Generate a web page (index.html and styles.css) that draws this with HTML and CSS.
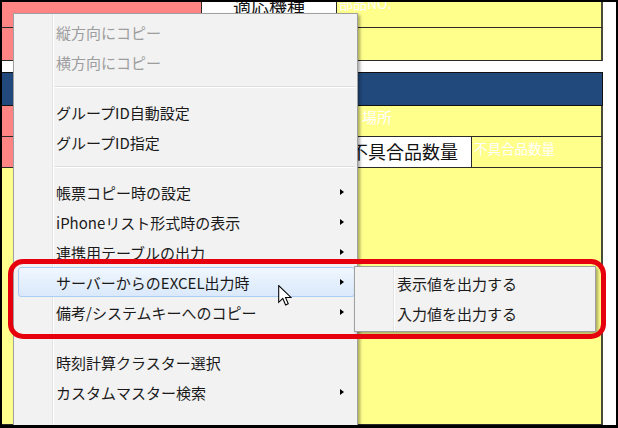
FILE: index.html
```html
<!DOCTYPE html>
<html lang="ja">
<head>
<meta charset="utf-8">
<title>Context menu</title>
<link rel="stylesheet" href="styles.css">
</head>
<body>
<div class="frame">
  <div class="sheet">
    <div class="row r1">
      <div class="cell pink w200"></div>
      <div class="cell white w135 head"><span>適応機種</span></div>
      <div class="cell yellow grow label top"><span>部品NO.</span></div>
    </div>
    <div class="row r2">
      <div class="cell pink w200"></div>
      <div class="cell yellow grow"></div>
    </div>
    <div class="gap"></div>
    <div class="band"></div>
    <div class="row r3">
      <div class="cell pink w200"></div>
      <div class="cell yellow w135"></div>
      <div class="cell yellow grow label place">場所</div>
    </div>
    <div class="row r4">
      <div class="cell pink w200"></div>
      <div class="cell yellow w135"></div>
      <div class="cell white w135 head2">不具合品数量</div>
      <div class="cell yellow grow label small">不具合品数量</div>
    </div>
    <div class="row r5">
      <div class="cell yellow grow"></div>
    </div>
  </div>

  <div class="menu">
    <div class="item disabled">縦方向にコピー</div>
    <div class="item disabled">横方向にコピー</div>
    <div class="sep"></div>
    <div class="item">グループID自動設定</div>
    <div class="item">グループID指定</div>
    <div class="sep"></div>
    <div class="item">帳票コピー時の設定<span class="arrow"></span></div>
    <div class="item">iPhoneリスト形式時の表示<span class="arrow"></span></div>
    <div class="item">連携用テーブルの出力<span class="arrow"></span></div>
    <div class="item hot">サーバーからのEXCEL出力時<span class="arrow"></span></div>
    <div class="item">備考/システムキーへのコピー<span class="arrow"></span></div>
    <div class="sep"></div>
    <div class="item">時刻計算クラスター選択</div>
    <div class="item">カスタムマスター検索<span class="arrow"></span></div>
  </div>

  <div class="submenu">
    <div class="item">表示値を出力する</div>
    <div class="item">入力値を出力する</div>
  </div>

  <div class="mark"></div>

  <svg class="cursor" width="14" height="21" viewBox="0 0 13 20">
    <path d="M0.5 0.5 L0.5 16.5 L4.4 12.8 L7.1 19 L9.6 17.9 L7 11.9 L12.2 11.9 Z" fill="#fff" stroke="#000" stroke-width="1" stroke-linejoin="miter"/>
  </svg>
</div>
</body>
</html>
```

FILE: styles.css
```css
body {
  margin: 0;
}

.frame {
  position: relative;
  width: 618px;
  height: 428px;
  box-sizing: border-box;
  border: 2px solid #000;
  border-bottom-width: 3px;
  background: #fff;
  overflow: hidden;
  font-family: "Noto Sans CJK JP", sans-serif;
}

.sheet {
  display: flex;
  flex-direction: column;
  width: 601px;
  height: 100%;
}

.row {
  display: flex;
}

.r1 { height: 26px; }
.r2 { height: 33px; }
.r3 { height: 31px; }
.r4 { height: 31px; }
.r5 { flex: 1; }

.gap { height: 11px; }

.band {
  height: 34px;
  box-sizing: border-box;
  background: #21497c;
  border-top: 1px solid #111;
  border-bottom: 1px solid #111;
  border-right: 1px solid #111;
}

.cell {
  box-sizing: border-box;
  border-right: 1px solid #2a2a2a;
  border-bottom: 1px solid #2a2a2a;
  overflow: hidden;
}

.pink { background: #ff8585; }
.yellow { background: #ffff8c; }
.white { background: #fff; }

.w200 { width: 200px; }
.w135 { width: 135px; }
.grow { flex: 1; }

.yellow.grow {
  border-right: 2px solid #4a4a3a;
}

.head {
  font-size: 18px;
  text-align: center;
  color: #111;
}

.head span {
  display: block;
  line-height: 18px;
  margin-top: -5px;
}

.head2 {
  font-size: 18px;
  line-height: 29px;
  text-align: center;
  color: #111;
}

.label {
  color: #fff;
  padding-left: 2px;
}

.top {
  font-size: 14px;
}

.top span {
  display: block;
  line-height: 18px;
  margin-top: -8px;
}

.place {
  font-size: 15px;
  line-height: 20px;
  padding-left: 25px;
  padding-top: 1px;
}

.small {
  font-size: 13.5px;
  line-height: 20px;
  padding-top: 1px;
}

/* context menu */
.menu {
  position: absolute;
  left: 11px;
  top: 11px;
  width: 345px;
  height: 440px;
  box-sizing: border-box;
  border: 1px solid #a0a0a0;
  background: linear-gradient(to right, #f2f2f2 0 38px, #e2e3e3 38px 39px, #fff 39px 40px, #f2f2f2 40px);
  box-shadow: 2px 2px 3px rgba(0, 0, 0, 0.35);
  padding: 3px 2px 0 0;
}

.item {
  height: 30px;
  box-sizing: border-box;
  display: flex;
  align-items: center;
  padding-left: 42px;
  font-size: 15px;
  color: #1a1a1a;
  white-space: nowrap;
}

.item.disabled {
  color: #9d9d9d;
}

.item.hot {
  margin-left: 4px;
  padding-left: 37px;
  border: 1px solid #aacdf3;
  border-radius: 3px;
  background: linear-gradient(#f0f7fe, #dae9fb);
}

.arrow {
  margin-left: auto;
  margin-right: 11px;
  width: 0;
  height: 0;
  border-left: 4px solid #000;
  border-top: 3.5px solid transparent;
  border-bottom: 3.5px solid transparent;
}

.item.hot .arrow {
  margin-right: 10px;
}

.sep {
  height: 20px;
  display: flex;
  align-items: center;
  padding-left: 41px;
}

.sep::after {
  content: "";
  flex: 1;
  border-top: 1px solid #dedede;
  border-bottom: 1px solid #fff;
}

.submenu {
  position: absolute;
  left: 352px;
  top: 264px;
  width: 242px;
  height: 66px;
  box-sizing: border-box;
  border: 1px solid #a0a0a0;
  background: linear-gradient(to right, #f2f2f2 0 38px, #e2e3e3 38px 39px, #fff 39px 40px, #f2f2f2 40px);
  box-shadow: 2px 2px 3px rgba(0, 0, 0, 0.35);
  padding-top: 1px;
}

/* annotation */
.mark {
  position: absolute;
  left: 6px;
  top: 257px;
  width: 598px;
  height: 80px;
  box-sizing: border-box;
  border: 5px solid #e6000e;
  border-radius: 15px;
}

.cursor {
  position: absolute;
  left: 276px;
  top: 283px;
}
```
